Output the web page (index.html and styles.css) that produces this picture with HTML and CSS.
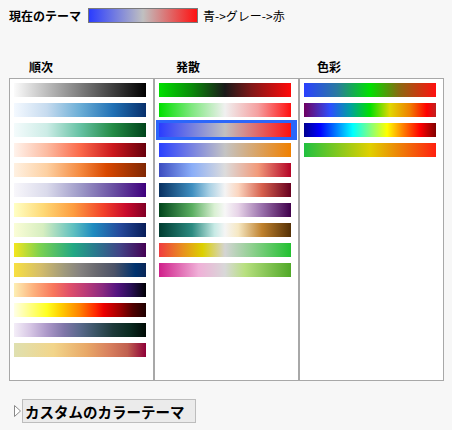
FILE: index.html
```html
<!DOCTYPE html>
<html lang="ja">

<head>
    <meta charset="UTF-8">
    <title>カラーテーマ</title>
    <link rel="stylesheet" href="styles.css">
</head>

<body>
    <div class="current">
        <span class="current-label">現在のテーマ</span>
        <span class="current-bar g-bgr"></span>
        <span class="current-name">青-&gt;グレー-&gt;赤</span>
    </div>

    <div class="panel">
        <div class="col">
            <div class="col-title">順次</div>
            <ul class="col-box">
                <li><span class="swatch g-gray"></span></li>
                <li><span class="swatch g-blues"></span></li>
                <li><span class="swatch g-bugn"></span></li>
                <li><span class="swatch g-reds"></span></li>
                <li><span class="swatch g-oranges"></span></li>
                <li><span class="swatch g-purples"></span></li>
                <li><span class="swatch g-ylorrd"></span></li>
                <li><span class="swatch g-ylgnbu"></span></li>
                <li><span class="swatch g-viridis"></span></li>
                <li><span class="swatch g-cividis"></span></li>
                <li><span class="swatch g-magma"></span></li>
                <li><span class="swatch g-hot"></span></li>
                <li><span class="swatch g-lavgreen"></span></li>
                <li><span class="swatch g-khaki"></span></li>
            </ul>
        </div>
        <div class="col">
            <div class="col-title col-title-mid">発散</div>
            <ul class="col-box">
                <li><span class="swatch g-gkr"></span></li>
                <li><span class="swatch g-gwr"></span></li>
                <li class="selected"><span class="swatch g-bgr"></span></li>
                <li><span class="swatch g-bgo"></span></li>
                <li><span class="swatch g-coolwarm"></span></li>
                <li><span class="swatch g-rdbu"></span></li>
                <li><span class="swatch g-prgn"></span></li>
                <li><span class="swatch g-brbg"></span></li>
                <li><span class="swatch g-rygg"></span></li>
                <li><span class="swatch g-piyg"></span></li>
            </ul>
        </div>
        <div class="col">
            <div class="col-title col-title-right">色彩</div>
            <ul class="col-box">
                <li><span class="swatch g-bgr-hue"></span></li>
                <li><span class="swatch g-spectrum"></span></li>
                <li><span class="swatch g-jet"></span></li>
                <li><span class="swatch g-gyr"></span></li>
            </ul>
        </div>
    </div>

    <div class="custom">
        <svg class="arrow" width="7" height="12" viewBox="0 0 7 12">
            <polygon points="0.5,0.5 6.5,6 0.5,11.5" fill="#fff" stroke="#8a8a8a" stroke-width="1" />
        </svg>
        <button class="custom-btn">カスタムのカラーテーマ</button>
    </div>
</body>

</html>
```

FILE: styles.css
```css
ul {
    padding: 0;
    margin: 0;
    list-style: none;
}

button {
    border: 0;
    outline: none;
}

body {
    margin: 0;
    background-color: #f7f7f7;
    font-family: "Noto Sans CJK JP", "Noto Sans", sans-serif;
    color: #000;
}

/* current theme */
.current {
    display: flex;
    align-items: center;
    height: 15px;
    padding: 8px 0 0 9px;
    font-size: 12px;
}

.current-label {
    font-weight: bold;
    margin-right: 7px;
}

.current-bar {
    display: block;
    width: 110px;
    height: 15px;
    box-sizing: border-box;
    border: 1px solid #7a7a7a;
}

.current-name {
    margin-left: 5px;
}

/* palette columns */
.panel {
    display: grid;
    grid-template-columns: 145px 145px 145px;
    margin: 36px 0 0 9px;
}

.col-title {
    height: 19px;
    line-height: 16px;
    padding-left: 20px;
    font-size: 12px;
    font-weight: bold;
}

.col-title-mid {
    padding-left: 22px;
}

.col-title-right {
    padding-left: 18px;
}

.col-box {
    height: 303px;
    box-sizing: border-box;
    border: 1px solid #a8a8a8;
    background-color: #fff;
    padding-top: 1px;
}

.col-box li {
    height: 20px;
    margin: 0 1px;
    padding: 3px 6px 3px 3px;
    box-sizing: border-box;
}

.col-box li.selected {
    background-color: #2b66fa;
}

.swatch {
    display: block;
    width: 132px;
    height: 14px;
}

/* sequential */
.g-gray { background: linear-gradient(to right, #fbfbfb, #000); }
.g-blues { background: linear-gradient(to right, #f4f9ff, #c6dbef 25%, #6baed6 50%, #2171b5 75%, #08306b); }
.g-bugn { background: linear-gradient(to right, #f4fbfc, #ccece6 25%, #66c2a4 50%, #238b45 75%, #00441b); }
.g-reds { background: linear-gradient(to right, #fff3ec, #fcbba1 25%, #fb6a4a 50%, #cb181d 75%, #67000d); }
.g-oranges { background: linear-gradient(to right, #fff1e2, #fdd0a2 25%, #f58a40 50%, #d94801 70%, #7f2704); }
.g-purples { background: linear-gradient(to right, #f8f7fb, #dadaeb 25%, #9e9ac8 50%, #6a51a3 75%, #3f007d); }
.g-ylorrd { background: linear-gradient(to right, #ffffc4, #fed976 22%, #fd9d40 45%, #f2402a 68%, #c80a2c 85%, #800026); }
.g-ylgnbu { background: linear-gradient(to right, #fbfdd6, #d6eec0 22%, #5fc0c0 45%, #1f8cc0 60%, #264a9c 80%, #081d58); }
.g-viridis { background: linear-gradient(to right, #f5e61e, #7ad151 20%, #22a884 45%, #2a788e 62%, #414487 80%, #440154); }
.g-cividis { background: linear-gradient(to right, #f8e040, #d4bd6a 20%, #a09a7c 38%, #858280 50%, #6a6a70 62%, #4c5368 76%, #00326e 92%, #0a2656); }
.g-magma { background: linear-gradient(to right, #fdefb4, #fdb07c 15%, #f8765c 30%, #e0506a 42%, #b83a78 55%, #8a2a80 67%, #541480 78%, #2a0f58 88%, #000004); }
.g-hot { background: linear-gradient(to right, #ffffe6, #ffff20 25%, #ffd000 35%, #ff8000 50%, #ff2800 62%, #ec0000 68%, #a00000 80%, #500000 90%, #1e0000); }
.g-lavgreen { background: linear-gradient(to right, #f4eef8, #d7c7e5 12%, #ac98c9 25%, #7f76a8 38%, #5a6a8c 50%, #3b5565 62%, #1e3a3a 75%, #0a2a20 88%, #000a05); }
.g-khaki { background: linear-gradient(to right, #dfe0b0, #f2d58a 30%, #e8a868 55%, #d8805e 72%, #c06050 86%, #8e0038); }

/* diverging */
.g-gkr { background: linear-gradient(to right, #00e000, #0a8a0a 25%, #1a1a1a 50%, #801818 70%, #ff0a0a); }
.g-gwr { background: linear-gradient(to right, #00e000, #80e880 25%, #f0f0f0 50%, #f5a0a0 75%, #ff1010); }
.g-bgr { background: linear-gradient(to right, #2a3cff, #c0c0c0 50%, #ff1010); }
.g-bgo { background: linear-gradient(to right, #2a40ff, #c4c4c4 50%, #f08000); }
.g-coolwarm { background: linear-gradient(to right, #3b4cc0, #8aaef8 25%, #dcdcdc 50%, #f29a7a 75%, #b40426); }
.g-rdbu { background: linear-gradient(to right, #083060, #3f8fc0 25%, #a8d0e4 38%, #f4f4f4 50%, #fbd6c0 60%, #d6604d 78%, #67001f); }
.g-prgn { background: linear-gradient(to right, #00441b, #5aae61 25%, #d9f0d3 42%, #f7f7f7 50%, #e7d4e8 60%, #9970ab 78%, #40004b); }
.g-brbg { background: linear-gradient(to right, #003c30, #2c8a80 25%, #c7eae5 42%, #f5f5f5 50%, #f6e8c3 60%, #bf812d 78%, #543005); }
.g-rygg { background: linear-gradient(to right, #f03c40, #e89020 18%, #dcd000 33%, #d4d4d4 50%, #90d090 70%, #22c030); }
.g-piyg { background: linear-gradient(to right, #d0208a, #f0b0d8 30%, #d8d8d8 50%, #b8e080 65%, #50a828); }

/* hue */
.g-bgr-hue { background: linear-gradient(to right, #2a40ff, #2a7aa0 25%, #00e000 50%, #8a6a10 72%, #ff1010); }
.g-spectrum { background: linear-gradient(to right, #700060, #2c50ff 20%, #00a0a0 35%, #00e000 50%, #e0d800 65%, #f08000 80%, #ff0000 93%, #c02020); }
.g-jet { background: linear-gradient(to right, #000090, #0000ff 12%, #00ffff 37%, #80ff80 50%, #ffff00 63%, #ff8000 75%, #ff0000 88%, #800000); }
.g-gyr { background: linear-gradient(to right, #20c040, #e0d000 50%, #ff2010); }

/* custom theme */
.custom {
    display: flex;
    align-items: center;
    gap: 1px;
    margin: 18px 0 0 14px;
}

.arrow {
    display: block;
}

.custom-btn {
    width: 174px;
    height: 24px;
    box-sizing: border-box;
    border: 1px solid #bdbdbd;
    background-color: #ebebeb;
    padding: 0 0 0 2px;
    text-align: left;
    font-family: "Noto Sans CJK JP", "Noto Sans", sans-serif;
    font-size: 14.5px;
    font-weight: bold;
    color: #000;
}
```
